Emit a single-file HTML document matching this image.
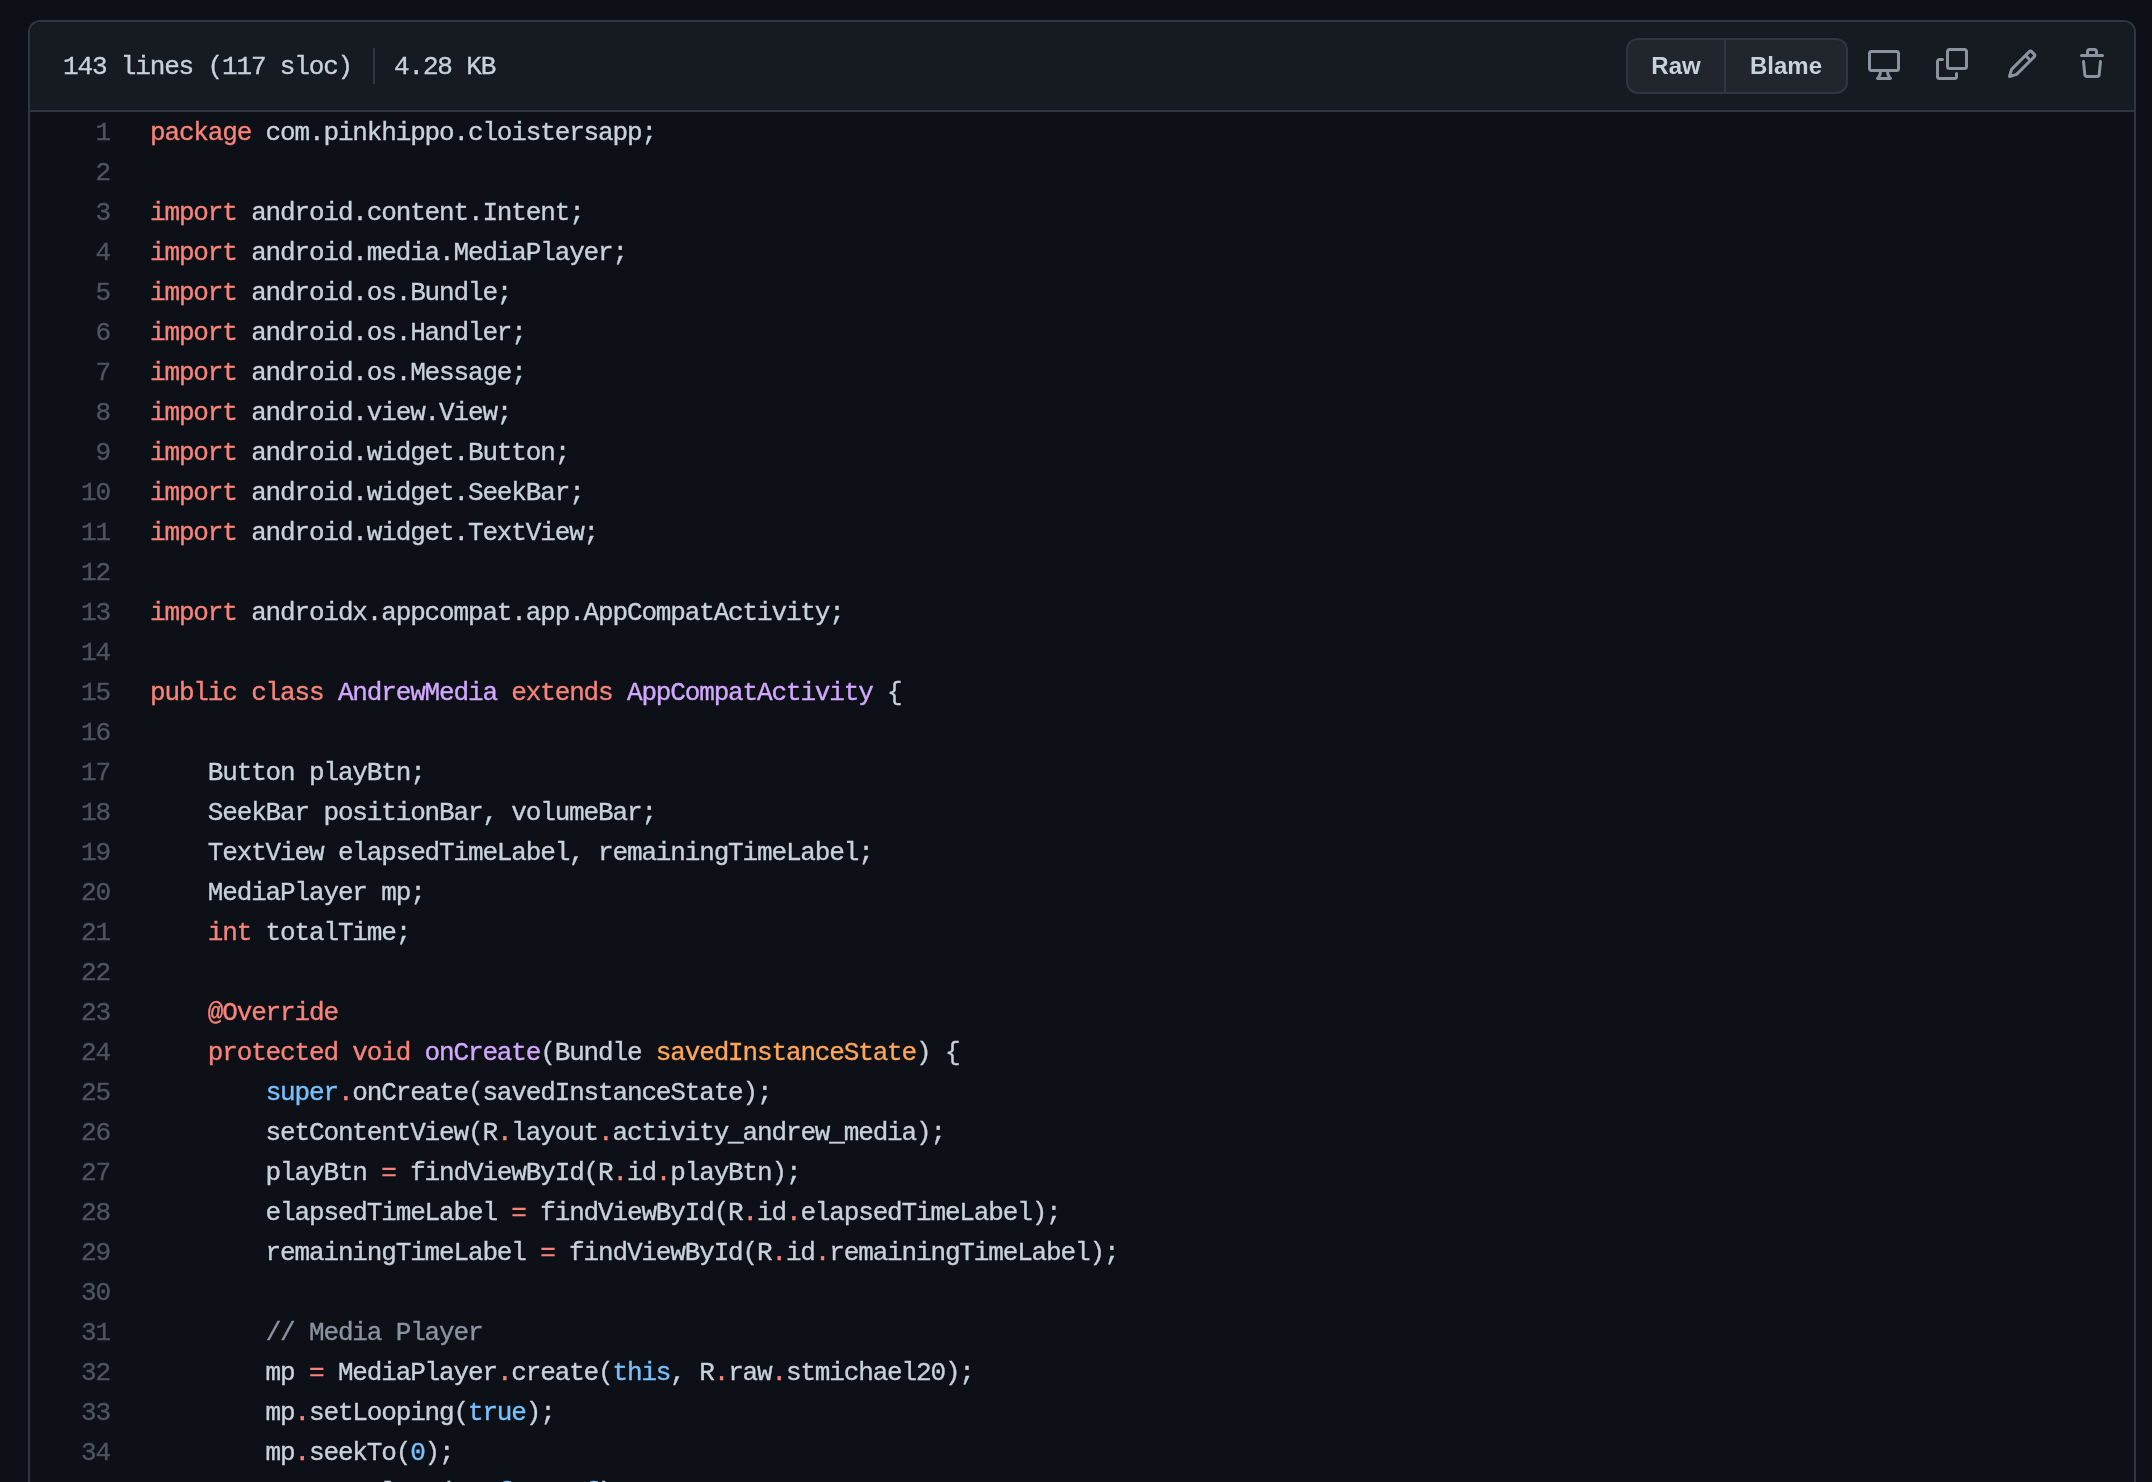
<!DOCTYPE html>
<html><head><meta charset="utf-8">
<style>
html,body{margin:0;padding:0;background:#0d1117;width:2152px;height:1482px;overflow:hidden;}
body{position:relative;font-family:"Liberation Mono",monospace;color:#c9d1d9;}
.box{position:absolute;left:28px;top:20px;width:2104px;height:1600px;border:2px solid #30363d;border-radius:12px 12px 0 0;background:#0d1117;overflow:hidden;}
.hdr{position:absolute;left:0;top:0;width:2104px;height:88px;background:#161b22;border-bottom:2px solid #30363d;border-radius:10px 10px 0 0;}
.info{position:absolute;left:33px;top:1px;height:88px;line-height:88px;font-size:26px;letter-spacing:-1.15px;white-space:pre;color:#c9d1d9;-webkit-text-stroke:0.35px currentColor;}
.div{position:absolute;left:343px;top:26px;width:2px;height:36px;background:#30363d;}
.info2{position:absolute;left:364px;top:1px;height:88px;line-height:88px;font-size:26px;letter-spacing:-1.15px;white-space:pre;-webkit-text-stroke:0.35px currentColor;}
.btns{position:absolute;left:1596px;top:16px;width:218px;height:52px;border:2px solid #30363d;border-radius:12px;background:#21262d;overflow:hidden;}
.btn{position:absolute;top:0;height:52px;line-height:52px;font-family:"Liberation Sans",sans-serif;font-weight:bold;font-size:24px;color:#c9d1d9;text-align:center;}
.sep{position:absolute;left:96px;top:0;width:2px;height:52px;background:#30363d;}
svg.ic{position:absolute;fill:#8b949e;}
.nums{position:absolute;left:0;top:91px;width:80px;text-align:right;font-size:26px;letter-spacing:-1.15px;line-height:40px;color:#4e555d;white-space:pre;-webkit-text-stroke:0.35px #4e555d;}
.code{position:absolute;left:120px;top:91px;font-size:26px;letter-spacing:-1.15px;line-height:40px;white-space:pre;color:#c9d1d9;-webkit-text-stroke:0.35px currentColor;}
.code,.nums,.info,.info2,.btn{will-change:transform;}
.k{color:#f8837a}.en{color:#d2a8ff}.c1{color:#79c0ff}.v{color:#ffa657}.c{color:#8b949e}
</style></head><body>
<div class="box">
 <div class="hdr">
  <div class="info">143 lines (117 sloc)</div>
  <div class="div"></div>
  <div class="info2">4.28 KB</div>
  <div class="btns">
   <div class="btn" style="left:0;width:96px">Raw</div>
   <div class="sep"></div>
   <div class="btn" style="left:98px;width:120px">Blame</div>
  </div>
  <svg class="ic" style="left:1838px;top:26px" width="32" height="32" viewBox="0 0 16 16"><path fill-rule="evenodd" d="M1.75 2.5h12.5a.25.25 0 01.25.25v7.5a.25.25 0 01-.25.25H1.75a.25.25 0 01-.25-.25v-7.5a.25.25 0 01.25-.25zM14.25 1H1.75A1.75 1.75 0 000 2.75v7.5C0 11.216.784 12 1.75 12h3.727c-.1 1.041-.52 1.872-1.292 2.757A.75.75 0 004.75 16h6.5a.75.75 0 00.565-1.243c-.772-.885-1.193-1.716-1.292-2.757h3.727A1.75 1.75 0 0016 10.25v-7.5A1.75 1.75 0 0014.25 1zM9.018 12H6.982a5.72 5.72 0 01-.765 2.5h3.566a5.72 5.72 0 01-.765-2.5z"/></svg>
  <svg class="ic" style="left:1906px;top:26px" width="32" height="32" viewBox="0 0 16 16"><path d="M0 6.75C0 5.784.784 5 1.75 5h1.5a.75.75 0 0 1 0 1.5h-1.5a.25.25 0 0 0-.25.25v7.5c0 .138.112.25.25.25h7.5a.25.25 0 0 0 .25-.25v-1.5a.75.75 0 0 1 1.5 0v1.5A1.75 1.75 0 0 1 9.25 16h-7.5A1.75 1.75 0 0 1 0 14.25Z"/><path d="M5 1.75C5 .784 5.784 0 6.75 0h7.5C15.216 0 16 .784 16 1.75v7.5A1.75 1.75 0 0 1 14.25 11h-7.5A1.75 1.75 0 0 1 5 9.25Zm1.75-.25a.25.25 0 0 0-.25.25v7.5c0 .138.112.25.25.25h7.5a.25.25 0 0 0 .25-.25v-7.5a.25.25 0 0 0-.25-.25Z"/></svg>
  <svg class="ic" style="left:1976px;top:26px" width="32" height="32" viewBox="0 0 16 16"><path d="M11.013 1.427a1.75 1.75 0 0 1 2.474 0l1.086 1.086a1.75 1.75 0 0 1 0 2.474l-8.61 8.61c-.21.21-.47.364-.756.445l-3.251.93a.75.75 0 0 1-.927-.928l.929-3.25c.081-.286.235-.547.445-.758l8.61-8.61Zm.176 4.823L9.75 4.81l-6.286 6.287a.253.253 0 0 0-.064.108l-.558 1.953 1.953-.558a.253.253 0 0 0 .108-.064Zm1.238-3.763a.25.25 0 0 0-.354 0L10.811 3.75l1.439 1.44 1.263-1.263a.25.25 0 0 0 0-.354Z"/></svg>
  <svg class="ic" style="left:2046px;top:26px" width="32" height="32" viewBox="0 0 16 16"><path d="M11 1.75V3h2.25a.75.75 0 0 1 0 1.5H2.75a.75.75 0 0 1 0-1.5H5V1.75C5 .784 5.784 0 6.75 0h2.5C10.216 0 11 .784 11 1.75ZM4.496 6.675l.66 6.6a.25.25 0 0 0 .249.225h5.19a.25.25 0 0 0 .249-.225l.66-6.6a.75.75 0 0 1 1.492.149l-.66 6.6A1.748 1.748 0 0 1 10.595 15h-5.19a1.75 1.75 0 0 1-1.741-1.575l-.66-6.6a.75.75 0 1 1 1.492-.15ZM6.5 1.75V3h3V1.75a.25.25 0 0 0-.25-.25h-2.5a.25.25 0 0 0-.25.25Z"/></svg>
 </div>
<div class="nums">1
2
3
4
5
6
7
8
9
10
11
12
13
14
15
16
17
18
19
20
21
22
23
24
25
26
27
28
29
30
31
32
33
34
35</div>
<div class="code"><span class="k">package</span> com.pinkhippo.cloistersapp;

<span class="k">import</span> android.content.Intent;
<span class="k">import</span> android.media.MediaPlayer;
<span class="k">import</span> android.os.Bundle;
<span class="k">import</span> android.os.Handler;
<span class="k">import</span> android.os.Message;
<span class="k">import</span> android.view.View;
<span class="k">import</span> android.widget.Button;
<span class="k">import</span> android.widget.SeekBar;
<span class="k">import</span> android.widget.TextView;

<span class="k">import</span> androidx.appcompat.app.AppCompatActivity;

<span class="k">public</span> <span class="k">class</span> <span class="en">AndrewMedia</span> <span class="k">extends</span> <span class="en">AppCompatActivity</span> {

    Button playBtn;
    SeekBar positionBar, volumeBar;
    TextView elapsedTimeLabel, remainingTimeLabel;
    MediaPlayer mp;
    <span class="k">int</span> totalTime;

    <span class="k">@Override</span>
    <span class="k">protected</span> <span class="k">void</span> <span class="en">onCreate</span>(Bundle <span class="v">savedInstanceState</span>) {
        <span class="c1">super</span><span class="k">.</span>onCreate(savedInstanceState);
        setContentView(R<span class="k">.</span>layout<span class="k">.</span>activity_andrew_media);
        playBtn <span class="k">=</span> findViewById(R<span class="k">.</span>id<span class="k">.</span>playBtn);
        elapsedTimeLabel <span class="k">=</span> findViewById(R<span class="k">.</span>id<span class="k">.</span>elapsedTimeLabel);
        remainingTimeLabel <span class="k">=</span> findViewById(R<span class="k">.</span>id<span class="k">.</span>remainingTimeLabel);

        <span class="c">// Media Player</span>
        mp <span class="k">=</span> MediaPlayer<span class="k">.</span>create(<span class="c1">this</span>, R<span class="k">.</span>raw<span class="k">.</span>stmichael20);
        mp<span class="k">.</span>setLooping(<span class="c1">true</span>);
        mp<span class="k">.</span>seekTo(<span class="c1">0</span>);
        mp<span class="k">.</span>setVolume(<span class="c1">0.5f</span>, <span class="c1">0.5f</span>);</div>
</div>
</body></html>
